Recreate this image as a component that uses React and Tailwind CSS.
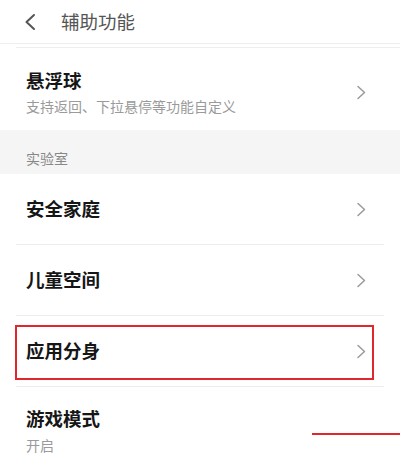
const font = { fontFamily: '"Noto Sans CJK SC", "Noto Sans", sans-serif' };

function Chevron() {
  return (
    <svg width="11" height="15" viewBox="0 0 11 15" fill="none" className="shrink-0">
      <path d="M2 1.5 L8.5 7.5 L2 13.5" stroke="#9a9a9a" strokeWidth="1.5" strokeLinecap="round" strokeLinejoin="round" />
    </svg>
  );
}

function Row({ title, boxed }) {
  return (
    <div className="relative mx-4 flex h-[71px] items-center justify-between border-b border-[#ececec] pl-[10px] pr-[17px]">
      <span className="text-[18.5px] font-semibold text-[#161616]">{title}</span>
      <Chevron />
      {boxed && (
        <div className="absolute left-[-1px] top-[9px] h-[55px] w-[359px] border-2 border-[#e0272b]" />
      )}
    </div>
  );
}

export default function App() {
  return (
    <div className="relative h-[467px] w-[400px] overflow-hidden bg-white" style={font}>
      {/* Header */}
      <div className="flex h-[44px] items-center border-b border-[#eeeeee]">
        <svg width="14" height="18" viewBox="0 0 14 18" fill="none" className="ml-[23px]">
          <path d="M11 2 L3.5 9 L11 16" stroke="#555" strokeWidth="2" strokeLinecap="round" strokeLinejoin="round" />
        </svg>
        <span className="ml-[24px] text-[18.5px] text-[#555]">辅助功能</span>
      </div>

      {/* Floating ball */}
      <div className="ml-4 mt-[3px] border-t border-[#eeeeee] pb-[14px] pl-[10px] pt-[20px]">
        <div className="flex items-center justify-between pr-[33px]">
          <div>
            <div className="text-[18.5px] font-semibold leading-6 text-[#161616]">悬浮球</div>
            <div className="mt-[4px] text-[14px] leading-5 text-[#9a9a9a]">支持返回、下拉悬停等功能自定义</div>
          </div>
          <Chevron />
        </div>
      </div>

      {/* Section */}
      <div className="h-[44px] bg-[#f5f5f5] pl-[26px] pt-[18px] text-[14px] leading-5 text-[#888]">实验室</div>

      <Row title="安全家庭" />
      <Row title="儿童空间" />
      <Row title="应用分身" boxed />

      <div className="pl-[26px] pt-[19px]">
        <div className="text-[18.5px] font-semibold leading-6 text-[#161616]">游戏模式</div>
        <div className="mt-[5px] text-[14px] leading-5 text-[#9a9a9a]">开启</div>
      </div>

      <div className="absolute left-[312px] top-[433px] h-[2px] w-[88px] bg-[#e0272b]" />
    </div>
  );
}
